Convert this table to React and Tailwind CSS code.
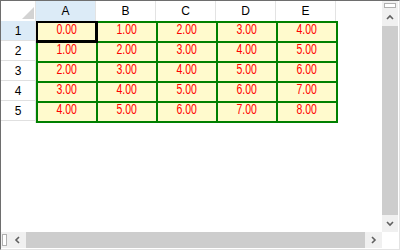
const cols = ['A', 'B', 'C', 'D', 'E'];
const rows = [1, 2, 3, 4, 5];

function Chevron({ dir }) {
  const pts = {
    up: '1,5 4,2 7,5',
    down: '1,2 4,5 7,2',
    left: '5,1 2,4 5,7',
    right: '2,1 5,4 2,7',
  };
  return (
    <svg width="8" height="8" viewBox="0 0 8 8">
      <polyline points={pts[dir]} fill="none" stroke="#606060" strokeWidth="1.6" />
    </svg>
  );
}

function VScroll() {
  return (
    <div className="w-[16px] mr-[1px] bg-[#f0f0f0] flex flex-col">
      <div className="h-[8px] px-[2px] pt-[2px] pb-[1px]">
        <div className="h-full border border-[#b0b0b0] bg-white"></div>
      </div>
      <div className="h-[17px] flex items-center justify-center">
        <Chevron dir="up" />
      </div>
      <div className="flex-1 bg-[#cdcdcd]"></div>
      <div className="h-[17px] flex items-center justify-center">
        <Chevron dir="down" />
      </div>
    </div>
  );
}

function HScroll() {
  return (
    <div className="h-[16px] flex">
      <div className="flex-1 flex bg-[#f0f0f0]">
        <div className="w-[8px] py-[2px] pl-[1px] pr-[2px]">
          <div className="h-full border border-[#b0b0b0] bg-white"></div>
        </div>
        <div className="w-[17px] flex items-center justify-center">
          <Chevron dir="left" />
        </div>
        <div className="flex-1 bg-[#cdcdcd]"></div>
        <div className="w-[17px] flex items-center justify-center">
          <Chevron dir="right" />
        </div>
      </div>
      <div className="w-[17px] bg-white"></div>
    </div>
  );
}

export default function App() {
  return (
    <div className="w-[400px] h-[250px] bg-white flex flex-col border-l border-t border-[#6e6e6e] border-r border-b border-r-[#e3e3e3] border-b-[#e3e3e3] pb-[1px] font-['Liberation_Sans',sans-serif]">
      <div className="flex flex-1 min-h-0">
        <div className="flex-1 flex flex-col">
          <div className="flex h-[20px]">
            <div className="w-[35px] relative border-r border-[#e3e3e3]">
              <svg className="absolute left-[21px] top-[6px]" width="12" height="12" viewBox="0 0 12 12">
                <polygon points="12,0 12,12 0,12" fill="#d3d3d3" />
              </svg>
            </div>
            {cols.map((c) => (
              <div
                key={c}
                className={`w-[60px] flex items-center justify-center text-[12px] text-black border-r border-[#e3e3e3] ${c === 'A' ? 'bg-[#dcebf7]' : 'bg-white'}`}
              >
                {c}
              </div>
            ))}
          </div>
          <div className="flex">
            <div className="w-[35px] flex flex-col border-r border-[#e3e3e3]">
              {rows.map((r) => (
                <div
                  key={r}
                  className={`h-[20px] flex items-center justify-center pt-[1px] text-[12px] text-black border-b border-[#e0e0e0] ${r === 1 ? 'bg-[#dcebf7]' : 'bg-white'}`}
                >
                  {r}
                </div>
              ))}
            </div>
            <div className="self-start grid grid-cols-[repeat(5,58px)] auto-rows-[18px] gap-[2px] p-[2px] bg-[#008000]">
              {rows.map((r) =>
                cols.map((c, ci) => (
                  <div
                    key={r + c}
                    className="relative bg-[#fffacd] text-[#ff0000] text-center text-[14px] leading-[13px]"
                  >
                    <span className="inline-block scale-x-[0.75]">{(r - 1 + ci).toFixed(2)}</span>
                    {r === 1 && ci === 0 && (
                      <span className="absolute -left-[2px] -top-[2px] -right-[2px] -bottom-[2px] border-l-2 border-t-2 border-r-[3px] border-b-[3px] border-black"></span>
                    )}
                  </div>
                ))
              )}
            </div>
          </div>
        </div>
        <VScroll />
      </div>
      <HScroll />
    </div>
  );
}
